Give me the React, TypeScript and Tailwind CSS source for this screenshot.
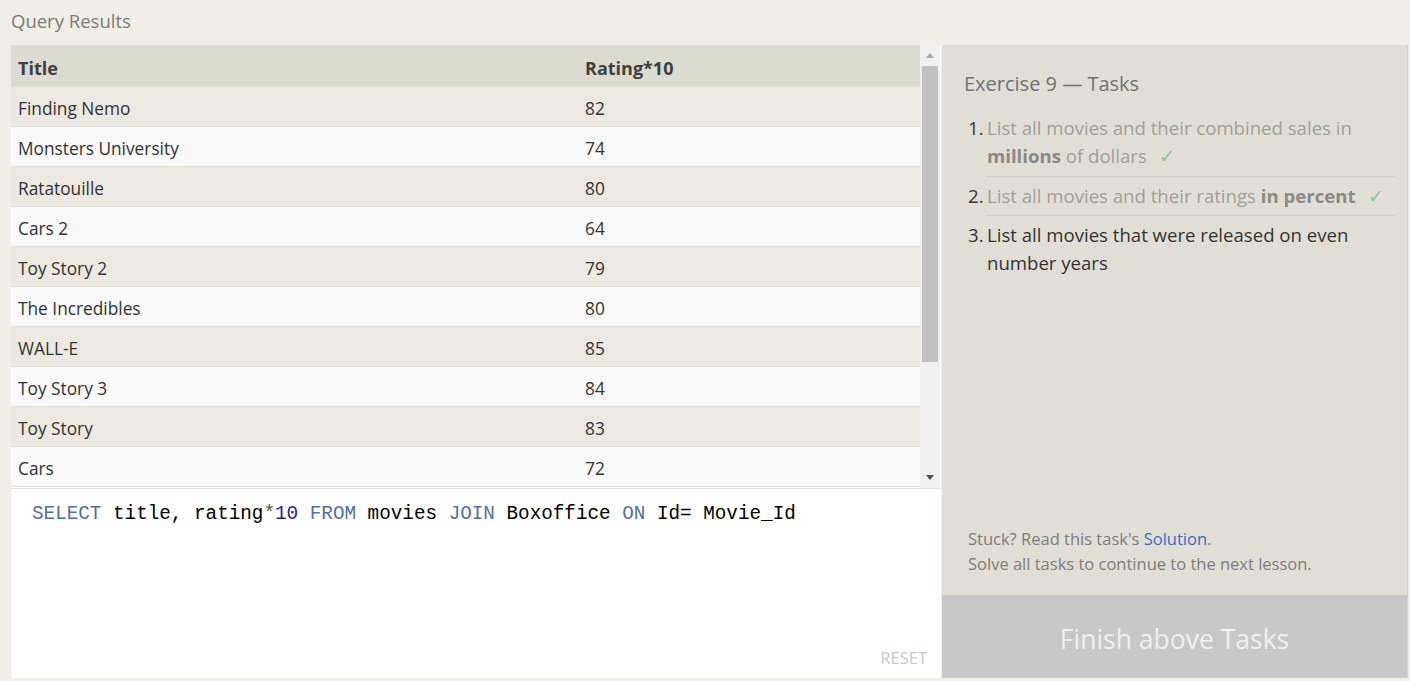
import React from "react";

const rows: [string, number][] = [
  ["Finding Nemo", 82],
  ["Monsters University", 74],
  ["Ratatouille", 80],
  ["Cars 2", 64],
  ["Toy Story 2", 79],
  ["The Incredibles", 80],
  ["WALL-E", 85],
  ["Toy Story 3", 84],
  ["Toy Story", 83],
  ["Cars", 72],
];

const font = { fontFamily: "'Open Sans', 'Liberation Sans', sans-serif" };

function Check() {
  return <span className="ml-3 font-light text-[#8cc79a]">✓</span>;
}

export default function App() {
  return (
    <div className="h-[681px] w-[1410px] overflow-hidden bg-[#f0eee7]" style={font}>
      <div className="h-[45px] pl-[11px] pt-[8px] text-[18.5px] leading-[26px] text-[#7b7b7b]">
        Query Results
      </div>

      <div className="flex h-[633px]">
        {/* left: results + editor */}
        <div className="ml-[11px] flex w-[930px] flex-col bg-white">
          <div className="flex h-[443px]">
            <div className="w-[909px]">
              <div className="flex h-[42px] items-center bg-[#dcdbd0] pt-[5px] text-[18px] font-bold text-[#3f3f3f]">
                <div className="w-[574px] pl-[7px]">Title</div>
                <div>Rating*10</div>
              </div>
              {rows.map(([t, r], i) => (
                <div
                  key={t}
                  className={
                    "flex h-[40px] items-center border-b border-[#e0dfda] pt-[4px] text-[17.3px] text-[#333]" +
                    (i % 2 === 0 ? " bg-[#ebe9e2]" : " bg-[#f9f9f9]")
                  }
                >
                  <div className="w-[574px] pl-[7px]">{t}</div>
                  <div>{r}</div>
                </div>
              ))}
            </div>
            <div className="flex w-[20px] flex-col items-center bg-[#f0f0f0]">
              <div className="flex h-[21px] items-center justify-center">
                <div className="h-0 w-0 border-x-[4px] border-b-[5px] border-x-transparent border-b-[#a3a3a3]" />
              </div>
              <div className="h-[296px] w-[16px] bg-[#c1c1c1]" />
              <div className="flex-1" />
              <div className="flex h-[21px] items-center justify-center">
                <div className="h-0 w-0 border-x-[4px] border-t-[5px] border-x-transparent border-t-[#505050]" />
              </div>
            </div>
            <div className="w-[1px] bg-white" />
          </div>

          <div className="flex flex-1 flex-col border-t border-[#e3e3e3] bg-white">
            <div
              className="pl-[21px] pt-[13px] text-[19.3px] leading-[24px] text-black"
              style={{ fontFamily: "'Liberation Mono', 'DejaVu Sans Mono', monospace" }}
            >
              <span className="text-[#4f6fa3]">SELECT</span> title, rating
              <span className="text-[#555]">*</span>
              <span className="text-[#1f1ba6]">10</span>{" "}
              <span className="text-[#4f6fa3]">FROM</span> movies{" "}
              <span className="text-[#4f6fa3]">JOIN</span> Boxoffice{" "}
              <span className="text-[#4f6fa3]">ON</span> Id= Movie_Id
            </div>
            <div className="flex-1" />
            <div className="pb-[7px] pr-[14px] text-right text-[16.5px] text-[#c8c8c8]">RESET</div>
          </div>
        </div>

        {/* right: tasks */}
        <div className="ml-[1px] flex w-[466px] flex-col border-r border-[#d6d4ca] bg-[#e1dfd5]">
          <div className="flex-1 pl-[22px] pr-[12px] pt-[25px]">
            <div className="text-[20px] leading-[28px] text-[#6e7275]">Exercise 9 — Tasks</div>
            <ol className="mt-[16px] text-[18.6px] leading-[28px]">
              <li className="flex pb-[6px]">
                <span className="w-[23px] pl-[4px] text-[#333]">1.</span>
                <span className="flex-1 text-[#a09f9a]">
                  List all movies and their combined sales in <b className="text-[#8a8985]">millions</b> of dollars
                  <Check />
                </span>
              </li>
              <li className="ml-[22px] flex border-t border-[#d2d0c6] py-[5px]">
                <span className="-ml-[22px] w-[23px] pl-[4px] text-[#333]">2.</span>
                <span className="flex-1 text-[#a09f9a]">
                  List all movies and their ratings <b className="text-[#8a8985]">in percent</b>
                  <Check />
                </span>
              </li>
              <li className="ml-[22px] flex border-t border-[#d2d0c6] pt-[5px]">
                <span className="-ml-[22px] w-[23px] pl-[4px] text-[#333]">3.</span>
                <span className="flex-1 text-[#333]">List all movies that were released on even number years</span>
              </li>
            </ol>
          </div>
          <div className="pb-[19px] pl-[26px] text-[16.5px] leading-[25px] text-[#7d7d7d]">
            <div>
              Stuck? Read this task's <span className="text-[#3a6bc4]">Solution</span>.
            </div>
            <div>Solve all tasks to continue to the next lesson.</div>
          </div>
          <div className="flex h-[83px] items-center justify-center bg-[#c8c8c8] pt-[6px] text-[26.5px] text-[#efefef]">
            Finish above Tasks
          </div>
        </div>
      </div>
    </div>
  );
}
